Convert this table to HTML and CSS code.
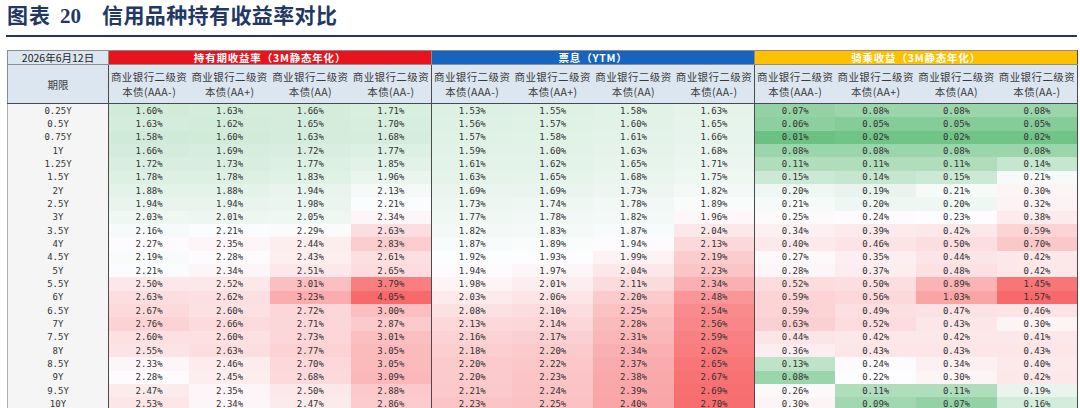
FILE: index.html
```html
<!DOCTYPE html>
<html lang="zh-CN">
<head>
<meta charset="utf-8">
<title>信用品种持有收益率对比</title>
<link rel="stylesheet" href="styles.css">
</head>
<body>
<div class="page">
  <h1 class="title"><span class="lab">图表</span><span class="num">20</span><span class="name">信用品种持有收益率对比</span></h1>
  <div class="rule"></div>
  <table class="tbl">
    <colgroup><col class="c0"><col span="12" class="cv"></colgroup>
    <thead>
      <tr class="r1">
        <th class="date">2026年6月12日</th>
        <th colspan="4" class="hd red">持有期收益率（3M静态年化）</th>
        <th colspan="4" class="hd blue">票息（YTM）</th>
        <th colspan="4" class="hd orange">骑乘收益（3M静态年化）</th>
      </tr>
      <tr class="r2">
        <th>期限</th>
        <th>商业银行二级资<br>本债(AAA-)</th><th>商业银行二级资<br>本债(AA+)</th><th>商业银行二级资<br>本债(AA)</th><th>商业银行二级资<br>本债(AA-)</th>
        <th>商业银行二级资<br>本债(AAA-)</th><th>商业银行二级资<br>本债(AA+)</th><th>商业银行二级资<br>本债(AA)</th><th>商业银行二级资<br>本债(AA-)</th>
        <th>商业银行二级资<br>本债(AAA-)</th><th>商业银行二级资<br>本债(AA+)</th><th>商业银行二级资<br>本债(AA)</th><th>商业银行二级资<br>本债(AA-)</th>
      </tr>
    </thead>
    <tbody>
      <tr><th>0.25Y</th><td>1.60%</td><td>1.63%</td><td>1.66%</td><td>1.71%</td><td>1.53%</td><td>1.55%</td><td>1.58%</td><td>1.63%</td><td>0.07%</td><td>0.08%</td><td>0.08%</td><td>0.08%</td></tr>
      <tr><th>0.5Y</th><td>1.63%</td><td>1.62%</td><td>1.65%</td><td>1.70%</td><td>1.56%</td><td>1.57%</td><td>1.60%</td><td>1.65%</td><td>0.06%</td><td>0.05%</td><td>0.05%</td><td>0.05%</td></tr>
      <tr><th>0.75Y</th><td>1.58%</td><td>1.60%</td><td>1.63%</td><td>1.68%</td><td>1.57%</td><td>1.58%</td><td>1.61%</td><td>1.66%</td><td>0.01%</td><td>0.02%</td><td>0.02%</td><td>0.02%</td></tr>
      <tr><th>1Y</th><td>1.66%</td><td>1.69%</td><td>1.72%</td><td>1.77%</td><td>1.59%</td><td>1.60%</td><td>1.63%</td><td>1.68%</td><td>0.08%</td><td>0.08%</td><td>0.08%</td><td>0.08%</td></tr>
      <tr><th>1.25Y</th><td>1.72%</td><td>1.73%</td><td>1.77%</td><td>1.85%</td><td>1.61%</td><td>1.62%</td><td>1.65%</td><td>1.71%</td><td>0.11%</td><td>0.11%</td><td>0.11%</td><td>0.14%</td></tr>
      <tr><th>1.5Y</th><td>1.78%</td><td>1.78%</td><td>1.83%</td><td>1.96%</td><td>1.63%</td><td>1.65%</td><td>1.68%</td><td>1.75%</td><td>0.15%</td><td>0.14%</td><td>0.15%</td><td>0.21%</td></tr>
      <tr><th>2Y</th><td>1.88%</td><td>1.88%</td><td>1.94%</td><td>2.13%</td><td>1.69%</td><td>1.69%</td><td>1.73%</td><td>1.82%</td><td>0.20%</td><td>0.19%</td><td>0.21%</td><td>0.30%</td></tr>
      <tr><th>2.5Y</th><td>1.94%</td><td>1.94%</td><td>1.98%</td><td>2.21%</td><td>1.73%</td><td>1.74%</td><td>1.78%</td><td>1.89%</td><td>0.21%</td><td>0.20%</td><td>0.20%</td><td>0.32%</td></tr>
      <tr><th>3Y</th><td>2.03%</td><td>2.01%</td><td>2.05%</td><td>2.34%</td><td>1.77%</td><td>1.78%</td><td>1.82%</td><td>1.96%</td><td>0.25%</td><td>0.24%</td><td>0.23%</td><td>0.38%</td></tr>
      <tr><th>3.5Y</th><td>2.16%</td><td>2.21%</td><td>2.29%</td><td>2.63%</td><td>1.82%</td><td>1.83%</td><td>1.87%</td><td>2.04%</td><td>0.34%</td><td>0.39%</td><td>0.42%</td><td>0.59%</td></tr>
      <tr><th>4Y</th><td>2.27%</td><td>2.35%</td><td>2.44%</td><td>2.83%</td><td>1.87%</td><td>1.89%</td><td>1.94%</td><td>2.13%</td><td>0.40%</td><td>0.46%</td><td>0.50%</td><td>0.70%</td></tr>
      <tr><th>4.5Y</th><td>2.19%</td><td>2.28%</td><td>2.43%</td><td>2.61%</td><td>1.92%</td><td>1.93%</td><td>1.99%</td><td>2.19%</td><td>0.27%</td><td>0.35%</td><td>0.44%</td><td>0.42%</td></tr>
      <tr><th>5Y</th><td>2.21%</td><td>2.34%</td><td>2.51%</td><td>2.65%</td><td>1.94%</td><td>1.97%</td><td>2.04%</td><td>2.23%</td><td>0.28%</td><td>0.37%</td><td>0.48%</td><td>0.42%</td></tr>
      <tr><th>5.5Y</th><td>2.50%</td><td>2.52%</td><td>3.01%</td><td>3.79%</td><td>1.98%</td><td>2.01%</td><td>2.11%</td><td>2.34%</td><td>0.52%</td><td>0.50%</td><td>0.89%</td><td>1.45%</td></tr>
      <tr><th>6Y</th><td>2.63%</td><td>2.62%</td><td>3.23%</td><td>4.05%</td><td>2.03%</td><td>2.06%</td><td>2.20%</td><td>2.48%</td><td>0.59%</td><td>0.56%</td><td>1.03%</td><td>1.57%</td></tr>
      <tr><th>6.5Y</th><td>2.67%</td><td>2.60%</td><td>2.72%</td><td>3.00%</td><td>2.08%</td><td>2.10%</td><td>2.25%</td><td>2.54%</td><td>0.59%</td><td>0.49%</td><td>0.47%</td><td>0.46%</td></tr>
      <tr><th>7Y</th><td>2.76%</td><td>2.66%</td><td>2.71%</td><td>2.87%</td><td>2.13%</td><td>2.14%</td><td>2.28%</td><td>2.56%</td><td>0.63%</td><td>0.52%</td><td>0.43%</td><td>0.30%</td></tr>
      <tr><th>7.5Y</th><td>2.60%</td><td>2.60%</td><td>2.73%</td><td>3.01%</td><td>2.16%</td><td>2.17%</td><td>2.31%</td><td>2.59%</td><td>0.44%</td><td>0.42%</td><td>0.42%</td><td>0.41%</td></tr>
      <tr><th>8Y</th><td>2.55%</td><td>2.63%</td><td>2.77%</td><td>3.05%</td><td>2.18%</td><td>2.20%</td><td>2.34%</td><td>2.62%</td><td>0.36%</td><td>0.43%</td><td>0.43%</td><td>0.43%</td></tr>
      <tr><th>8.5Y</th><td>2.33%</td><td>2.46%</td><td>2.70%</td><td>3.05%</td><td>2.20%</td><td>2.22%</td><td>2.37%</td><td>2.65%</td><td>0.13%</td><td>0.24%</td><td>0.34%</td><td>0.40%</td></tr>
      <tr><th>9Y</th><td>2.28%</td><td>2.45%</td><td>2.68%</td><td>3.09%</td><td>2.20%</td><td>2.23%</td><td>2.38%</td><td>2.67%</td><td>0.08%</td><td>0.22%</td><td>0.30%</td><td>0.42%</td></tr>
      <tr><th>9.5Y</th><td>2.47%</td><td>2.35%</td><td>2.50%</td><td>2.88%</td><td>2.21%</td><td>2.24%</td><td>2.39%</td><td>2.69%</td><td>0.26%</td><td>0.11%</td><td>0.11%</td><td>0.19%</td></tr>
      <tr><th>10Y</th><td>2.53%</td><td>2.34%</td><td>2.47%</td><td>2.86%</td><td>2.23%</td><td>2.25%</td><td>2.40%</td><td>2.70%</td><td>0.30%</td><td>0.09%</td><td>0.07%</td><td>0.16%</td></tr>
    </tbody>
  </table>
</div>
<script src="heat.js"></script>
</body>
</html>
```

FILE: styles.css
```css
html, body {
  margin: 0;
  padding: 0;
  background: #ffffff;
}

.page {
  width: 1080px;
  padding: 0 3px 0 6px;
  box-sizing: border-box;
}

.title {
  margin: 0;
  height: 28px;
  line-height: 28px;
  padding-left: 1px;
  font-size: 21px;
  font-weight: 700;
  color: #1f3864;
  font-family: "Noto Sans CJK SC", sans-serif;
  white-space: nowrap;
  display: flex;
  align-items: baseline;
}

.title .lab {
  letter-spacing: 1px;
}

.title .num {
  font-family: "Liberation Serif", serif;
  margin-left: 9px;
}

.title .name {
  margin-left: 21px;
  letter-spacing: 0.4px;
}

.rule {
  margin-top: 7px;
  height: 2px;
  background: #1f3864;
}

.tbl {
  margin-top: 13px;
  margin-left: 1px;
  border-collapse: collapse;
  table-layout: fixed;
  width: 1070px;
  color: #333333;
}

.c0 { width: 101px; }
.cv { width: 80.75px; }

.tbl th,
.tbl td {
  padding: 0;
  text-align: center;
  white-space: nowrap;
  overflow: hidden;
}

.r1 th {
  height: 13px;
  line-height: 13px;
  font-family: "Noto Sans CJK SC", sans-serif;
  font-size: 10.5px;
  border: 1px solid #8c8c8c;
}

.r1 .date {
  background: #dce6f1;
  color: #222222;
  font-weight: 400;
}

.r1 .hd {
  color: #ffffff;
  font-weight: 700;
  letter-spacing: 0.8px;
  border-left-color: #4a4a4a;
}

.r1 .red { background: #e8131c; }
.r1 .blue { background: #1763bd; }
.r1 .orange { background: #ffc000; border-right-color: #4a4a4a; }

.r2 th {
  height: 38px;
  background: #dce6f1;
  font-family: "Noto Sans CJK SC", sans-serif;
  font-size: 10.5px;
  line-height: 15px;
  font-weight: 400;
  color: #3a3a3a;
  border-top: 1px solid #9aa6b4;
  border-bottom: 1px solid #4a4a4a;
  letter-spacing: 0.4px;
}

.r2 th:first-child {
  border-left: 1px solid #8c8c8c;
  letter-spacing: 0;
}

.r2 th:nth-child(2),
.r2 th:nth-child(6),
.r2 th:nth-child(10) {
  border-left: 1px solid #4a4a4a;
}

.r2 th:last-child {
  border-right: 1px solid #4a4a4a;
}

.tbl tbody tr {
  height: 13.33px;
}

.tbl tbody th,
.tbl tbody td {
  height: 13.33px;
  line-height: 12px;
  font-family: "DejaVu Sans Mono", monospace;
  font-size: 9px;
  font-weight: 400;
  color: #333333;
}

.tbl tbody th {
  background: #f5f5f5;
  border-left: 1px solid #b0b0b0;
}

.tbl tbody td:nth-child(2),
.tbl tbody td:nth-child(6),
.tbl tbody td:nth-child(10) {
  border-left: 1px solid #4a4a4a;
}

.tbl tbody td:last-child {
  border-right: 1px solid #4a4a4a;
}
```

FILE: heat.js
```js
(function () {
  var scales = [
    { g: 0, w: 2.25, r: 4.05 },
    { g: 0, w: 1.93, r: 2.72 },
    { g: 0, w: 0.22, r: 1.57 }
  ];
  var white = [253, 253, 255];
  var green = [99, 190, 123];
  var red = [248, 105, 107];
  function mix(a, b, t) {
    return 'rgb(' + a.map(function (c, i) { return Math.round(c + (b[i] - c) * t); }).join(',') + ')';
  }
  function clamp(t) { return Math.max(0, Math.min(1, t)); }
  var rows = document.querySelectorAll('.tbl tbody tr');
  rows.forEach(function (tr) {
    tr.querySelectorAll('td').forEach(function (td, i) {
      var s = scales[Math.floor(i / 4)];
      var v = parseFloat(td.textContent);
      var color;
      if (v <= s.w) {
        color = mix(white, green, clamp((s.w - v) / (s.w - s.g)));
      } else {
        color = mix(white, red, clamp((v - s.w) / (s.r - s.w)));
      }
      td.style.backgroundColor = color;
    });
  });
})();
```
